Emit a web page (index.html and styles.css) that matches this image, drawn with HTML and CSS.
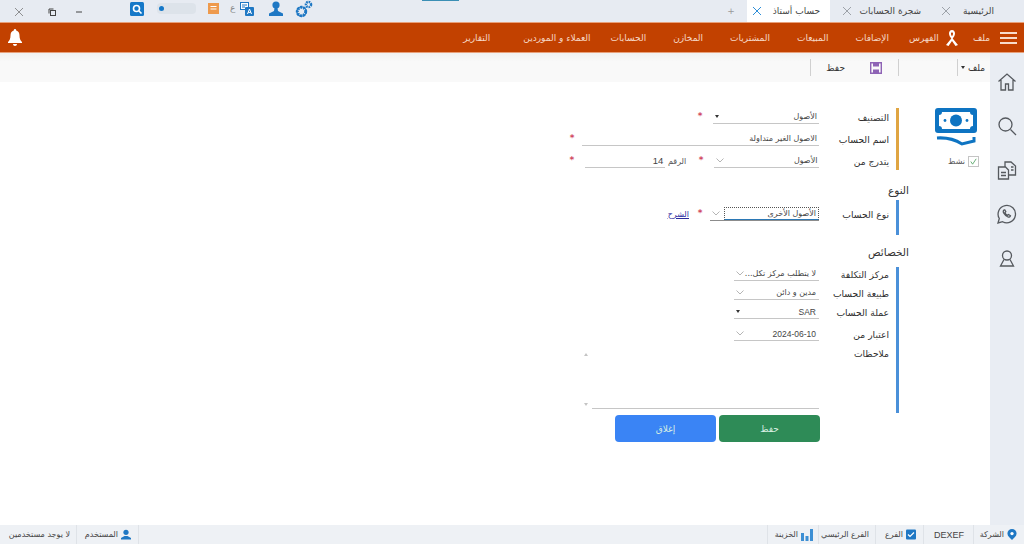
FILE: index.html
```html
<!DOCTYPE html>
<html lang="ar" dir="rtl">
<head>
    <meta charset="UTF-8">
    <meta name="viewport" content="width=device-width, initial-scale=1.0">
    <title>حساب أستاذ</title>
    <link rel="stylesheet" href="styles.css">
</head>
<body>
    <div class="tabbar">
        <div class="tab first">
            <span>الرئيسية</span>
            <svg class="tab-x" viewBox="0 0 10 10"><path d="M1 1l8 8M9 1l-8 8"/></svg>
        </div>
        <div class="tab second">
            <span>شجرة الحسابات</span>
            <svg class="tab-x" viewBox="0 0 10 10"><path d="M1 1l8 8M9 1l-8 8"/></svg>
        </div>
        <div class="tab active">
            <span>حساب أستاذ</span>
            <svg class="tab-x" viewBox="0 0 10 10"><path d="M1 1l8 8M9 1l-8 8"/></svg>
        </div>
        <div class="tab-add">+</div>
        <div class="tab-accent"></div>
        <div class="win-tools">
            <svg class="gear" viewBox="0 0 18 18">
                <circle cx="6.500" cy="11.500" r="4.200" fill="none" stroke="#1f78c4" stroke-width="3" stroke-dasharray="2 1"/>
                <circle cx="6.500" cy="11.500" r="4.600" fill="none" stroke="#1f78c4" stroke-width="1.400"/>
                <circle cx="13.500" cy="4.500" r="2.600" fill="none" stroke="#1f78c4" stroke-width="2.400" stroke-dasharray="1.600 .8"/>
            </svg>
            <svg class="user-top" viewBox="0 0 14 15"><circle cx="7" cy="4" r="3.600" fill="#1f78c4"/><path d="M5.500 7h3l.5 3 5 2.500V15H0v-2.500L5 10z" fill="#1f78c4"/></svg>
            <svg class="translate" viewBox="0 0 14 14">
                <rect x=".5" y=".5" width="8" height="7" fill="#fff" stroke="#1f78c4"/>
                <path d="M2 3h5M2 5h3" stroke="#1f78c4"/>
                <rect x="5" y="5" width="9" height="9" rx="1" fill="#1f78c4"/>
                <path d="M7.500 12l2-5 2 5M8.300 10.400h2.400" fill="none" stroke="#fff"/>
            </svg>
            <span class="lang">ع</span>
            <svg class="orange-doc" viewBox="0 0 11 11"><rect width="11" height="11" fill="#ee9a4d"/><path d="M2.500 3.500h6M2.500 6h6" stroke="#fff" stroke-width="1.200"/></svg>
            <div class="toggle"><i></i></div>
            <svg class="search-top" viewBox="0 0 14 14"><rect width="14" height="14" rx="1.500" fill="#1578c8"/><circle cx="6.500" cy="6.500" r="3" fill="none" stroke="#fff" stroke-width="1.600"/><path d="M9 9l2.500 2.500" stroke="#fff" stroke-width="1.600"/></svg>
            <svg class="win-btn min" viewBox="0 0 8 8"><path d="M1 4h6" stroke="#444"/></svg>
            <svg class="win-btn restore" viewBox="0 0 8 8"><rect x="2.500" y="2.500" width="5" height="5" fill="none" stroke="#444"/><path d="M1 5.500V1h4.500" fill="none" stroke="#444"/></svg>
            <svg class="win-btn close" viewBox="0 0 10 10"><path d="M1 1l8 8M9 1l-8 8" stroke="#777" stroke-width=".8"/></svg>
        </div>
    </div>

    <nav class="menubar">
        <div class="burger"><i></i><i></i><i></i></div>
        <a class="m-file">ملف</a>
        <svg class="ribbon" viewBox="0 0 14 18"><path d="M7 1C4.800 1 4 3 4 4.500c0 2 1.500 4 2.300 5L1 16l2.500 1L7 12l3.500 5L13 16 7.700 9.500C8.500 8.500 10 6.500 10 4.500 10 3 9.200 1 7 1zm0 2.500c.8 0 1 .6 1 1.200 0 .8-.5 1.800-1 2.500-.5-.7-1-1.700-1-2.500 0-.6.200-1.200 1-1.200z" fill="#fff"/></svg>
        <a class="m-index">الفهرس</a>
        <a>الإضافات</a>
        <a>المبيعات</a>
        <a>المشتريات</a>
        <a>المخازن</a>
        <a>الحسابات</a>
        <a class="m-clients">العملاء و الموردين</a>
        <a>التقارير</a>
        <svg class="bell" viewBox="0 0 14 17"><path d="M7 0c.8 0 1.200.6 1.200 1.400C10.500 2 11.500 4 11.500 6.500c0 3 .8 5 2.500 6.500v1H0v-1c1.700-1.500 2.500-3.500 2.500-6.500C2.500 4 3.500 2 5.800 1.400 5.800.6 6.200 0 7 0zM5 15h4c0 1.200-.9 2-2 2s-2-.8-2-2z" fill="#fff"/></svg>
    </nav>

    <div class="workspace">
        <aside class="sidebar">
            <svg viewBox="0 0 20 20"><path d="M1.500 9.500L10 2l8.500 7.500M4 8v10h4.500v-6h3v6H16V8"/></svg>
            <svg viewBox="0 0 20 20"><circle cx="8.500" cy="8.500" r="6.500"/><path d="M13.500 13.500L19 19"/></svg>
            <svg viewBox="0 0 20 20"><path d="M1.500 7h7l3 3v9h-10zM8 7V2h6l4.500 4v9H11.500M4 12.500h5M4 15.500h5M14 7h2.500M14 10h2.500"/></svg>
            <svg viewBox="0 0 20 20"><path d="M1 19l1.300-4.500A8.700 8.700 0 1 1 5.600 17.700z"/><path d="M7 6c-1 .6-1 2 0 3.500 1 1.700 2.500 3 4 3.500 1.300.3 2.300-.3 2.500-1.300l-2-1.200-1 .8c-1-.5-2-1.600-2.500-2.600l.8-1L7.800 6z"/></svg>
            <svg viewBox="0 0 20 20"><circle cx="10" cy="7.500" r="4.500"/><path d="M7 11.500L3.500 18h13L13 11.500"/></svg>
        </aside>

        <div class="content">
            <div class="toolbar">
                <span class="tool-file">ملف</span>
                <span class="caret"></span>
                <span class="tool-sep sep-file"></span>
                <span class="tool-sep sep-save"></span>
                <svg class="save-icon" viewBox="0 0 12 12"><path d="M.7.700h10.600v10.600H.7z" fill="none" stroke="#8e63b5" stroke-width="1.400"/><path d="M3 1h6v3.500H3zM3 7.500h6V11H3z" fill="#8e63b5"/></svg>
                <span class="tool-save">حفظ</span>
                <span class="tool-sep sep-end"></span>
            </div>

            <main class="page">
                <div class="badge-col">
                    <svg class="money" viewBox="0 0 42 39">
                        <path d="M0 3q0-3 3-3h36q3 0 3 3v19q0 3-3 3H3q-3 0-3-3z" fill="#0e74c2"/>
                        <path d="M4 7q3 0 3-3h28q0 3 3 3v11q-3 0-3 3H7q0-3-3-3z" fill="#fff"/>
                        <circle cx="21" cy="12.500" r="6" fill="#0e74c2"/>
                        <circle cx="10" cy="12.500" r="1.400" fill="#0e74c2"/>
                        <circle cx="32" cy="12.500" r="1.400" fill="#0e74c2"/>
                        <path d="M2 30q14-1 25 6l12-3v-4" fill="none" stroke="#0e74c2" stroke-width="3"/>
                    </svg>
                    <div class="active-check">
                        <span class="check"><svg viewBox="0 0 10 10"><path d="M2 5l2 3 4-6" fill="none" stroke="#5aa76a"/></svg></span>
                        <span>نشط</span>
                    </div>
                </div>

                <form class="form">
                    <section class="group group-main">
                        <div class="row">
                            <label class="lbl">التصنيف</label>
                            <div class="field w-106"><span class="val">الأصول</span><span class="caret"></span></div>
                            <span class="star">*</span>
                        </div>
                        <div class="row">
                            <label class="lbl">اسم الحساب</label>
                            <div class="field w-237"><span class="val">الاصول الغير متداولة</span></div>
                            <span class="star narrow">*</span>
                        </div>
                        <div class="row">
                            <label class="lbl">يتدرج من</label>
                            <div class="field w-106"><span class="val">الأصول</span><svg class="chev" viewBox="0 0 8 5"><path d="M.5.500L4 4 7.500.500"/></svg></div>
                            <span class="star">*</span>
                            <span class="num-lbl">الرقم</span>
                            <div class="field w-81"><span class="val num">14</span></div>
                            <span class="star">*</span>
                        </div>
                    </section>

                    <h3 class="group-title title-type">النوع</h3>
                    <section class="group group-type">
                        <div class="row">
                            <label class="lbl">نوع الحساب</label>
                            <div class="field w-109 focused"><span class="val">الأصول الأخرى</span><svg class="chev" viewBox="0 0 8 5"><path d="M.5.500L4 4 7.500.500"/></svg></div>
                            <span class="star small">*</span>
                            <a class="explain">الشرح</a>
                        </div>
                    </section>

                    <h3 class="group-title title-props">الخصائص</h3>
                    <section class="group group-props">
                        <div class="row tight">
                            <label class="lbl">مركز التكلفة</label>
                            <div class="field w-85"><span class="val">لا يتطلب مركز تكل...</span><svg class="chev" viewBox="0 0 8 5"><path d="M.5.500L4 4 7.500.500"/></svg></div>
                        </div>
                        <div class="row tight">
                            <label class="lbl">طبيعة الحساب</label>
                            <div class="field w-85"><span class="val">مدين و دائن</span><svg class="chev" viewBox="0 0 8 5"><path d="M.5.500L4 4 7.500.500"/></svg></div>
                        </div>
                        <div class="row tight">
                            <label class="lbl">عملة الحساب</label>
                            <div class="field w-85"><span class="val latin">SAR</span><span class="caret"></span></div>
                        </div>
                        <div class="row tight date-row">
                            <label class="lbl">اعتبار من</label>
                            <div class="field w-85"><span class="val latin">2024-06-10</span><svg class="chev" viewBox="0 0 8 5"><path d="M.5.500L4 4 7.500.500"/></svg></div>
                        </div>
                        <div class="row notes-row">
                            <label class="lbl">ملاحظات</label>
                            <div class="notes">
                                <div class="notes-box"></div>
                                <div class="notes-scroll"><span class="arrow-up"></span><span class="arrow-down"></span></div>
                            </div>
                        </div>
                    </section>

                    <div class="actions">
                        <button type="button" class="btn btn-save">حفظ</button>
                        <button type="button" class="btn btn-close">إغلاق</button>
                    </div>
                </form>
            </main>
        </div>
    </div>

    <footer class="statusbar">
        <div class="st-cell st-company">
            <svg class="st-icon" viewBox="0 0 10 12"><path d="M5 0a5 5 0 0 1 5 5c0 3-3 5-5 7-2-2-5-4-5-7a5 5 0 0 1 5-5z" fill="#1f78c4"/><circle cx="5" cy="5" r="1.800" fill="#fff"/></svg>
            <span>الشركة</span>
        </div>
        <div class="st-cell st-dexef"><span class="latin-st">DEXEF</span></div>
        <div class="st-cell st-branch">
            <svg class="st-icon" viewBox="0 0 10 10"><rect width="10" height="10" rx="1" fill="#1f78c4"/><path d="M2 5l2 2 4-4" fill="none" stroke="#fff" stroke-width="1.200"/></svg>
            <span>الفرع</span>
        </div>
        <div class="st-cell st-main"><span>الفرع الرئيسي</span></div>
        <div class="st-cell st-safe">
            <svg class="st-bars" viewBox="0 0 12 12"><path d="M0 4h3v8H0zM4.500 7h3v5h-3zM9 0h3v12H9z" fill="#3d8fd4"/></svg>
            <span>الخزينة</span>
        </div>
        <div class="st-spacer"></div>
        <div class="st-cell st-user">
            <svg class="st-icon" viewBox="0 0 10 10"><circle cx="5" cy="2.800" r="2.600" fill="#1f78c4"/><path d="M0 10V8.500L3.500 6.500h3L10 8.500V10z" fill="#1f78c4"/></svg>
            <span>المستخدم</span>
        </div>
        <div class="st-cell st-nouser"><span>لا يوجد مستخدمين</span></div>
    </footer>
</body>
</html>
```

FILE: styles.css
```css
html, body {
    margin: 0;
    height: 100%;
}

body {
    display: flex;
    flex-direction: column;
    height: 544px;
    overflow: hidden;
    font-family: "DejaVu Sans", sans-serif;
    font-size: 9px;
    color: #333;
    background-color: #ffffff;
}

/* top tabs */
.tabbar {
    position: relative;
    display: flex;
    align-items: center;
    height: 22px;
    background-color: #e7ebf2;
    color: #444;
}

.tab {
    display: flex;
    align-items: center;
    justify-content: space-between;
    height: 22px;
    box-sizing: border-box;
    white-space: nowrap;
}

.tab.first {
    width: 53px;
    margin-right: 30px;
}

.tab.second {
    width: 79px;
    margin-right: 20px;
}

.tab.active {
    width: 83px;
    padding: 0 10px 0 5px;
    margin-right: 12px;
    background-color: #ffffff;
}

.tab-x {
    width: 10px;
    height: 10px;
    fill: none;
    stroke: #8a8f96;
    stroke-width: 0.8;
}

.active .tab-x {
    stroke: #2f8fd8;
    stroke-width: 1;
}

.tab-add {
    width: 12px;
    margin-right: 10px;
    text-align: center;
    color: #999;
}

.tab-accent {
    position: absolute;
    top: 0;
    left: 422px;
    width: 37px;
    height: 1px;
    background-color: #3b8fb5;
}

.win-tools {
    position: relative;
    flex: 1;
    height: 22px;
}

.win-tools svg, .win-tools .toggle, .win-tools .lang {
    position: absolute;
}

.gear { left: 295px; top: 0; width: 18px; height: 18px; }
.user-top { left: 269px; top: 1px; width: 14px; height: 15px; }
.translate { left: 240px; top: 2px; width: 14px; height: 14px; }
.lang { left: 230px; top: 3px; font-size: 9px; color: #888; }
.orange-doc { left: 208px; top: 3px; width: 11px; height: 11px; }
.search-top { left: 130px; top: 2px; width: 14px; height: 14px; }
.win-btn.min { left: 75px; top: 8px; width: 8px; height: 8px; }
.win-btn.restore { left: 48px; top: 8px; width: 8px; height: 8px; }
.win-btn.close { left: 14px; top: 7px; width: 10px; height: 10px; }

.toggle {
    left: 157px;
    top: 3px;
    width: 39px;
    height: 11px;
    border-radius: 4px;
    background-color: #dde3ea;
}

.toggle i {
    position: absolute;
    left: 2px;
    top: 3px;
    width: 5px;
    height: 5px;
    border-radius: 50%;
    background-color: #1578c8;
}

/* orange menu */
.menubar {
    display: flex;
    align-items: center;
    height: 31px;
    padding: 0 7px 0 8px;
    background-color: #c24100;
    border-top: 1px solid #e8a07a;
    border-bottom: 1px solid #e8a07a;
    box-sizing: border-box;
    color: #f6d8c6;
    font-size: 9px;
    white-space: nowrap;
}

.burger {
    display: flex;
    flex-direction: column;
    justify-content: space-between;
    width: 17px;
    height: 12px;
    margin-left: 10px;
}

.burger i {
    height: 2px;
    background-color: #f8dccb;
}

.menubar a {
    margin-left: 27px;
}

.menubar .m-file {
    margin-left: 14px;
}

.menubar .m-index {
    margin-right: 6px;
    margin-left: 20px;
}

.menubar .m-clients {
    margin-right: -7px;
    margin-left: 33px;
}

.ribbon {
    width: 14px;
    height: 18px;
}

.bell {
    width: 14px;
    height: 17px;
    margin-right: auto;
}

/* right rail + content */
.workspace {
    flex: 1;
    display: flex;
    min-height: 0;
}

.sidebar {
    width: 34px;
    display: flex;
    flex-direction: column;
    align-items: center;
    gap: 24px;
    padding-top: 19px;
    box-sizing: border-box;
    background-color: #e9edf3;
}

.sidebar svg {
    width: 20px;
    height: 20px;
    fill: none;
    stroke: #55595e;
    stroke-width: 1.300;
}

.content {
    flex: 1;
    display: flex;
    flex-direction: column;
}

.toolbar {
    display: flex;
    align-items: center;
    height: 29px;
    flex-shrink: 0;
    background: linear-gradient(#f1f1f1, #f9f9f9 30%);
    color: #333;
}

.tool-file {
    margin-right: 5px;
    width: 20px;
}

.toolbar .caret {
    margin-right: 0;
}

.tool-sep {
    width: 1px;
    height: 17px;
    background-color: #d0d0d0;
}

.sep-file {
    margin-right: 3px;
}

.sep-save {
    margin-right: 58px;
}

.save-icon {
    width: 12px;
    height: 12px;
    margin-right: 16px;
}

.tool-save {
    width: 18px;
    margin-right: 25px;
}

.sep-end {
    margin-right: 16px;
}

.caret {
    display: inline-block;
    width: 0;
    height: 0;
    border: 2.500px solid transparent;
    border-top: 3px solid #333;
    border-bottom: 0;
}

.page {
    flex: 1;
    display: flex;
    align-items: flex-start;
    padding: 26px 5px 0 0;
}

.badge-col {
    width: 60px;
    margin-left: 16px;
}

.money {
    display: block;
    width: 42px;
    height: 39px;
    margin-right: 8px;
}

.active-check {
    display: flex;
    align-items: center;
    gap: 3px;
    margin: 9px 6px 0 0;
    font-size: 8px;
    color: #555;
}

.check {
    width: 9px;
    height: 9px;
    border: 1px solid #c4c4c4;
    background-color: #ffffff;
}

.check svg {
    display: block;
}

/* form */
.form {
    width: 350px;
}

.group {
    margin-right: 10px;
    border-right: 3px solid #4a90d9;
}

.group-main {
    display: flex;
    flex-direction: column;
    gap: 4px;
    border-right-color: #e0a542;
}

.group-type {
    height: 35px;
    padding-top: 5px;
    box-sizing: border-box;
}

.group-props {
    height: 146px;
}

.group-title {
    margin: 0;
    font-size: 10.500px;
    font-weight: normal;
    line-height: 16px;
}

.title-type {
    margin-top: 12px;
    margin-bottom: 2px;
}

.title-props {
    margin-top: 9px;
    margin-bottom: 7px;
}

.row {
    display: flex;
    align-items: center;
    height: 18px;
    white-space: nowrap;
}

.row.tight {
    height: 14px;
    margin-bottom: 5px;
}

.row.date-row {
    margin-top: 8px;
    margin-bottom: 6px;
}

.lbl {
    width: 77px;
    padding-right: 7px;
    box-sizing: border-box;
    font-size: 9.200px;
    color: #2e2e2e;
}

.field {
    display: flex;
    align-items: center;
    justify-content: space-between;
    align-self: flex-start;
    height: 16px;
    box-sizing: border-box;
    padding: 2px 2px 0 2px;
    border-bottom: 1px solid #c6c6c6;
}

.tight .field {
    height: 14px;
    padding: 0 3px 0 2px;
}

.w-81 { width: 81px; }
.w-85 { width: 85px; }
.w-106 { width: 106px; }
.w-109 { width: 109px; }
.w-237 { width: 237px; }

.val {
    font-size: 8px;
    color: #444;
}

.latin {
    font-family: "Liberation Sans", sans-serif;
    font-size: 8.500px;
}

.num {
    font-family: "Liberation Sans", sans-serif;
    font-size: 9.500px;
}

.chev {
    width: 8px;
    height: 5px;
    fill: none;
    stroke: #b5b5b5;
}

.star {
    width: 26px;
    margin-top: -3px;
    text-align: center;
    color: #d0485e;
    font-size: 9px;
    font-weight: bold;
}

.star.narrow {
    width: 20px;
}

.star.small {
    width: 20px;
}

.num-lbl {
    width: 21px;
    padding-right: 2px;
    font-size: 8px;
    color: #555;
}

.focused {
    padding: 2px 0 0 2px;
    border-bottom-color: #8c8c8c;
}

.focused .val {
    flex: 0 0 95px;
    height: 13px;
    padding-right: 2px;
    box-sizing: border-box;
    line-height: 11px;
    border: 1px dotted #555;
    border-bottom: 1px solid #2b78b5;
}

.explain {
    margin-right: 1px;
    font-size: 8px;
    color: #2a2a9e;
    text-decoration: underline;
}

.notes-row {
    align-items: flex-start;
    height: 61px;
    padding-top: 1px;
}

.notes {
    position: relative;
    width: 237px;
    height: 61px;
}

.notes-box {
    margin-left: 10px;
    height: 100%;
    box-sizing: border-box;
    border-bottom: 1px solid #c6c6c6;
}

.notes-scroll {
    position: absolute;
    top: 5px;
    bottom: 3px;
    left: 2px;
    display: flex;
    flex-direction: column;
    justify-content: space-between;
}

.arrow-up, .arrow-down {
    width: 0;
    height: 0;
    border: 2px solid transparent;
}

.arrow-up {
    border-top: 0;
    border-bottom: 3px solid #c4c4c4;
}

.arrow-down {
    border-bottom: 0;
    border-top: 3px solid #c4c4c4;
}

.actions {
    display: flex;
    gap: 3px;
    margin: 2px 89px 0 0;
}

.btn {
    width: 101px;
    height: 27px;
    border: none;
    border-radius: 4px;
    font-family: inherit;
    font-size: 9px;
    color: #d9efe3;
}

.btn-save {
    background-color: #2e8b57;
}

.btn-close {
    background-color: #3a84f5;
}

/* status bar */
.statusbar {
    display: flex;
    align-items: stretch;
    height: 19px;
    flex-shrink: 0;
    background-color: #eef1f5;
    font-size: 8px;
    color: #444;
    white-space: nowrap;
}

.st-cell {
    display: flex;
    align-items: center;
    gap: 3px;
    box-sizing: border-box;
    border-left: 1px solid #dfe3e8;
}

.st-company { width: 51px; padding-right: 7px; }
.st-dexef { width: 50px; padding-right: 9px; }
.st-branch { width: 48px; padding-right: 7px; }
.st-main { width: 57px; padding-right: 6px; }
.st-safe { width: 51px; padding-right: 5px; }
.st-user { width: 63px; padding-right: 7px; border-right: 1px solid #dfe3e8; }
.st-nouser { width: 76px; padding-right: 6px; border-left: none; }

.st-spacer {
    flex: 1;
}

.st-icon {
    width: 10px;
    height: 11px;
}

.st-bars {
    width: 12px;
    height: 12px;
}

.latin-st {
    font-family: "Liberation Sans", sans-serif;
    font-size: 9px;
}
```
